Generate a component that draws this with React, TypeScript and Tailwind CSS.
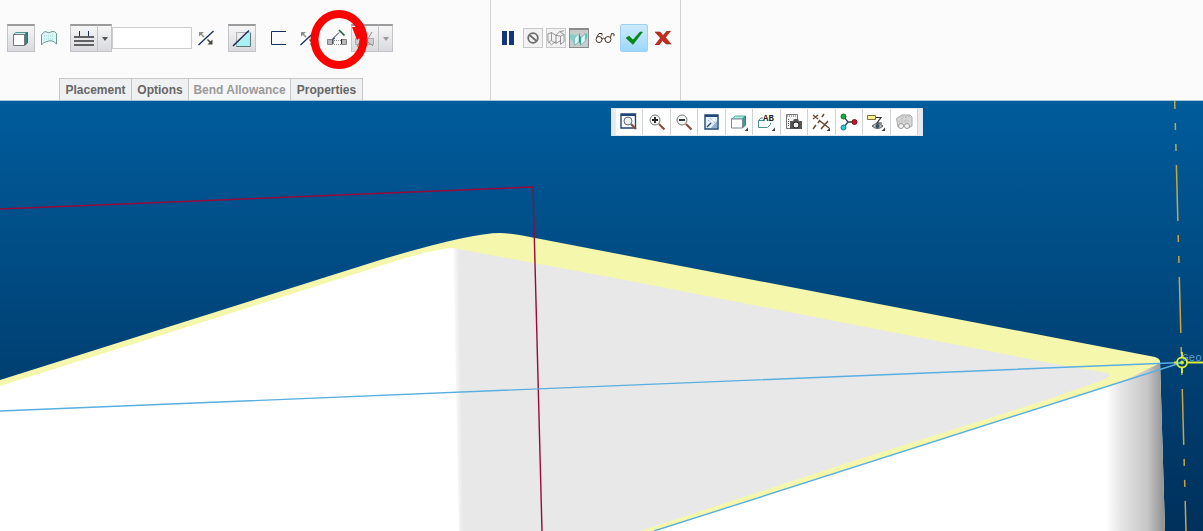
import type { ReactNode } from 'react';
import clsx from 'clsx';

const boxCls = 'border border-[#c4c4c8] border-t-2 border-t-[#9b9b9b] bg-linear-to-b from-[#f6f6f7] to-[#d9dadd]';

function ToolButton({ label, boxed, disabled, className, children }: {
  label: string;
  boxed?: boolean;
  disabled?: boolean;
  className?: string;
  children: ReactNode;
}) {
  return (
    <button
      type="button"
      aria-label={label}
      disabled={disabled}
      className={clsx('relative flex h-7 shrink-0 items-center justify-center', boxed && boxCls, className ?? 'w-7')}
    >
      {children}
    </button>
  );
}

function Caret({ color }: { color: string }) {
  return (
    <svg width="6" height="4" viewBox="0 0 6 4">
      <path d="M0 0h6L3 4z" fill={color} />
    </svg>
  );
}

function SolidIcon() {
  return (
    <svg width="16" height="16" viewBox="0 0 16 16">
      <path d="M.5 3.500 3 1.500h11.500l-2.500 2z" fill="#c4f5f1" stroke="#5c8f90" />
      <path d="M11.500 3.500 14.500 1.500V12l-3 2.500z" fill="#2f8a80" stroke="#356e6c" />
      <path d="M.5 3.500h11v11H.5z" fill="#fff" stroke="#777" />
    </svg>
  );
}

function SurfaceIcon() {
  return (
    <svg width="18" height="16" viewBox="0 0 18 16">
      <path d="M1.500 4.500 5 1.500Q9 4 12 1.500q3-.5 4.500 2V14Q12 9 7 11.500 3 12 1.500 15z" fill="#dff8f6" stroke="#6d9695" />
      <path d="M4 6h10M4 9h10" stroke="#8fd3cd" strokeDasharray="1 1" />
    </svg>
  );
}

function ThicknessIcon() {
  return (
    <svg width="22" height="18" viewBox="0 0 22 18">
      <path d="M6.500 1v5M15.500 1v5" stroke="#14305e" />
      <path d="M1 7h20M1 11h20M1 15h20" stroke="#626262" strokeWidth="2" />
    </svg>
  );
}

function FlipIcon() {
  return (
    <svg width="18" height="16" viewBox="0 0 18 16">
      <path d="M1.500 15 16.500 1" stroke="#14305e" strokeWidth="1.300" />
      <path d="M2 2h5L2 6.500z" fill="#8d8d87" />
      <path d="m4 4 3 3" stroke="#8d8d87" strokeWidth="1.500" />
      <path d="M15.500 9.500v5h-5z" fill="#474740" />
      <path d="m10.500 9.500 3 3" stroke="#474740" strokeWidth="1.500" />
    </svg>
  );
}

function CutIcon() {
  return (
    <svg width="20" height="18" viewBox="0 0 20 18">
      <path d="M4.500 16.500V2.500h14" fill="none" stroke="#777" strokeDasharray="1 1" />
      <path d="M5 16V14L17 2.500h1.500v14H5z" fill="#a7f1f5" />
      <path d="M18.500 2.500v14h-14" fill="none" stroke="#5d7778" />
      <path d="M1 16 17 .5" stroke="#14305e" strokeWidth="1.500" />
    </svg>
  );
}

function OpenProfileIcon() {
  return (
    <svg width="16" height="16" viewBox="0 0 16 16">
      <path d="M15 1.500H.5v13H15" fill="none" stroke="#14305e" />
    </svg>
  );
}

function BendIcon() {
  return (
    <svg width="20" height="18" viewBox="0 0 20 18">
      <path d="M.5 10.500h5v5h-5zM14.500 10.500h5v5h-5z" fill="#b7b7b7" stroke="#858585" />
      <path d="M7 11.500h7M7 15.500h7" stroke="#888" strokeDasharray="1 1" />
      <path d="M6 15V9.500l6-6M14.500 15v-5M6 10l2-1" fill="none" stroke="#14305e" />
      <path d="m12 1 5.500 5.500" stroke="#14652c" strokeWidth="1.600" />
    </svg>
  );
}

function BendOffIcon() {
  return (
    <svg width="22" height="18" viewBox="0 0 22 18">
      <path d="M1.500 8.500h7v6h-7zM13.500 8.500h6v6h-6z" fill="#cfcfcf" stroke="#aaa" />
      <path d="M3 17 11 1M9 17l9-15M1 2l18 14" stroke="#8c8c8c" />
      <path d="m7 16 5-10M10 16l4-8" stroke="#f2aaaa" />
    </svg>
  );
}

function WireBoxIcon({ solid }: { solid?: boolean }) {
  return (
    <svg width="20" height="20" viewBox="0 0 20 20">
      {solid ? (
        <>
          <path d="M0 5h5l5 4v4l-4 4-6-8z" fill="#86cfc9" />
          <path d="m5 9 5-5v9l-5 4zM12 9l5-5v8l-5 5z" fill="#d2fbf6" stroke="#559f9a" strokeWidth=".6" />
          <path d="m10 4 2 4v9l-2-4z" fill="#338e88" />
          <path d="M17 4h2v5l-2 3z" fill="#6abdb7" />
        </>
      ) : (
        <path
          d="M1 5.500 5 4l5 3v9l-5-3V4M1 5.500v8l4 4 5-4M10 7l4-4 5 3v8l-4 3V8l-5-1M14 3l5-1M5 12 1 16M15 8l4-2M10 16l5-3"
          fill="none"
          stroke="#737373"
          strokeWidth=".8"
        />
      )}
    </svg>
  );
}

function GlassesIcon() {
  return (
    <svg width="20" height="12" viewBox="0 0 20 12" fill="none" stroke="#493424">
      <circle cx="4" cy="7.500" r="3" fill="#fff" />
      <circle cx="13" cy="7.500" r="3" fill="#fff" />
      <path d="M7 7q1.500-1.500 3 0M1.500 5.500 4 1.500h3v2M15.500 5.500l1-4 2.500.5v2" />
    </svg>
  );
}

const TABS = [
  { name: 'Placement', width: 'w-[72px]' },
  { name: 'Options', width: 'w-[57px]' },
  { name: 'Bend Allowance', width: 'w-[102px]', disabled: true },
  { name: 'Properties', width: 'w-[73px]' },
];

function FeatureTools() {
  return (
    <div className="flex items-center">
      <div className="ml-[7px] flex">
        <ToolButton label="Solid" boxed><SolidIcon /></ToolButton>
        <ToolButton label="Surface"><SurfaceIcon /></ToolButton>
      </div>
      <div className="ml-[7px] flex items-center">
        <ToolButton label="Thickness" boxed><ThicknessIcon /></ToolButton>
        <ToolButton label="Thickness options" boxed className="w-3.5 border-l-0"><Caret color="#555" /></ToolButton>
        <input aria-label="Depth value" className="h-[22px] w-20 border border-[#cdcdcd] bg-white px-1 text-xs" />
        <ToolButton label="Flip direction"><FlipIcon /></ToolButton>
      </div>
      <div className="ml-2">
        <ToolButton label="Remove material" boxed><CutIcon /></ToolButton>
      </div>
      <div className="ml-2 flex">
        <ToolButton label="Thicken sketch" className="w-[29px]"><OpenProfileIcon /></ToolButton>
        <ToolButton label="Flip side" className="w-[29px]"><FlipIcon /></ToolButton>
        <ToolButton label="Add bends on edges" className="z-10 w-[29px]">
          <BendIcon />
          <svg className="pointer-events-none absolute -top-4 -left-3 max-w-none" width="58" height="62" viewBox="0 0 58 62">
            <ellipse cx="29" cy="31.500" rx="24.500" ry="25.500" fill="none" stroke="#fe0000" strokeWidth="8" />
            <path d="M42 19h10v9l-5 4z" fill="#fe0000" />
          </svg>
        </ToolButton>
        <ToolButton label="Bend side" boxed disabled><BendOffIcon /></ToolButton>
        <ToolButton label="Bend side options" boxed disabled className="w-3.5 border-l-0"><Caret color="#999" /></ToolButton>
      </div>
    </div>
  );
}

function DashboardControls() {
  const small = 'flex size-5 items-center justify-center border border-[#c9c9c9] bg-[#f2f2f2]';
  return (
    <div className="flex items-center gap-[5px] pl-[7px]">
      <button type="button" aria-label="Pause" className="flex h-7 w-5 items-center justify-center">
        <svg width="12" height="14" viewBox="0 0 12 14"><path d="M0 0h5v14H0zM7 0h5v14H7z" fill="#17357c" /></svg>
      </button>
      <div className="flex gap-[3px]">
        <button type="button" aria-label="No preview" className={small}>
          <svg width="12" height="12" viewBox="0 0 12 12" fill="none" stroke="#6c6c6c" strokeWidth="1.800">
            <circle cx="6" cy="6" r="4.800" />
            <path d="m2.500 3 7 6" />
          </svg>
        </button>
        <button type="button" aria-label="Unattached preview" className={small}><WireBoxIcon /></button>
        <button type="button" aria-label="Attached preview" className="flex size-5 items-center justify-center border border-t-2 border-[#8b8b8b] bg-[#c9cacc]">
          <WireBoxIcon solid />
        </button>
      </div>
      <button type="button" aria-label="Verify" className="flex h-7 w-[21px] items-center justify-center"><GlassesIcon /></button>
      <button type="button" aria-label="Accept" className="flex size-7 items-center justify-center rounded-xs border border-[#9fd2f1] bg-linear-to-b from-[#cbeafa] to-[#9bd8fb]">
        <svg width="18" height="14" viewBox="0 0 18 14"><path d="m1 7 3-2 4 4 7-8h2.500L8 13.500z" fill="#078a15" stroke="#086c11" strokeWidth=".5" /></svg>
      </button>
      <button type="button" aria-label="Cancel" className="flex h-7 w-5 items-center justify-center">
        <svg width="16" height="14" viewBox="0 0 16 14">
          <path d="M0 1h5l3 3.500L12 0h3.500l-5 6.500L16 13h-5L7.500 9.500 4 14H0l5.500-7z" fill="#c92a19" stroke="#8b2218" strokeWidth=".6" />
        </svg>
      </button>
    </div>
  );
}

function Magnifier({ sign }: { sign: string }) {
  return (
    <>
      <path d="m11 11 5.500 5.500" stroke="#87503f" strokeWidth="2.200" />
      <circle cx="7" cy="7" r="5" fill="#f4f7f7" stroke="#777" />
      <path d={sign} stroke="#222" strokeWidth="1.800" />
    </>
  );
}

const corner = <path d="M18 14.500V18h-3.500z" fill="#444" />;

const VIEW_TOOLS = [
  {
    label: 'Refit',
    icon: (
      <>
        <path d="M1 1h14.500v14H1z" fill="#fff" stroke="#1f4676" strokeWidth="1.400" />
        <path d="M1 2h14" stroke="#1f4676" strokeWidth="2" />
        <path d="m11 11 5 5" stroke="#87503f" strokeWidth="2.200" />
        <circle cx="8" cy="8" r="4" fill="#e8f3f7" stroke="#667" />
      </>
    ),
  },
  { label: 'Zoom in', icon: <Magnifier sign="M4 7h6M7 4v6" /> },
  { label: 'Zoom out', icon: <Magnifier sign="M4 7h6" /> },
  {
    label: 'Repaint',
    icon: (
      <>
        <path d="M2 2h13v14H2z" fill="#e3f0fa" stroke="#1f4676" strokeWidth="1.400" />
        <path d="M2 3h13" stroke="#1f4676" strokeWidth="2" />
        <path d="M8 15 14 8v7z" fill="#91add2" />
        <path d="m6 12 6-6" stroke="#fff" strokeWidth="2" />
        <path d="m4 14 4-4" stroke="#304869" strokeWidth="1.500" />
        <path d="m5 7 5 4M7 5l5 5" stroke="#8aa2bf" strokeDasharray="1 1" />
      </>
    ),
  },
  {
    label: 'Display style',
    icon: (
      <>
        <path d="m1.500 6 4-3h10l-3 3z" fill="#a9f1e0" stroke="#58ac9d" />
        <path d="m12.500 6 3-3v9l-3 3z" fill="#36a18e" stroke="#348477" />
        <path d="M1.500 6h11v9h-11z" fill="#fff" stroke="#789" />
        {corner}
      </>
    ),
  },
  {
    label: 'Saved orientations',
    icon: (
      <>
        <path d="M6 5H4L1.500 7.500v7h9l3-3V10M1.500 7.500H6" fill="none" stroke="#4b8f91" />
        <text x="6" y="8" fontSize="9" fontWeight="700" fill="#222" fontFamily="Liberation Mono, monospace">AB</text>
        {corner}
      </>
    ),
  },
  {
    label: 'View manager',
    icon: (
      <>
        <path d="M1.500 1.500h11v14h-11z" fill="#f5f5f5" stroke="#777" />
        <path d="M2 3h10M3.500 6v8" stroke="#555" strokeDasharray="1 1" />
        <path d="M5 8h3l1-2h4l1 2h3v8H5z" fill="#555" />
        <circle cx="11" cy="12" r="3" fill="#eee" stroke="#222" />
      </>
    ),
  },
  {
    label: 'Datum display filters',
    icon: (
      <>
        <path
          d="m1 2 5 4M6 2 1 6M12 1l-2 3M8 7l-2 3M4 12l-3 4M8 8l9 7M16 8l-7 8"
          fill="none"
          stroke="#6b4730"
          strokeWidth="1.500"
        />
        {corner}
      </>
    ),
  },
  {
    label: 'Spin center',
    icon: (
      <>
        <path d="m4 4 4 5-4 5M8 9h6" fill="none" stroke="#24494d" strokeWidth="1.300" />
        <circle cx="3.500" cy="3.500" r="2.500" fill="#1bae3d" stroke="#116a28" />
        <circle cx="14.500" cy="9" r="2.500" fill="#c91822" stroke="#7b121a" />
        <circle cx="3.500" cy="14.500" r="2.500" fill="#36c6cf" stroke="#167c8b" />
      </>
    ),
  },
  {
    label: 'Annotation display',
    icon: (
      <>
        <path d="M.5 2.500h8v4h-8z" fill="#fff393" stroke="#80702c" />
        <path d="M9 4.500h5L10 10h5" fill="none" stroke="#333" strokeWidth="1.200" />
        <path d="M5 13q5.500-5 11 0-5.500 5-11 0z" fill="#bbc3ca" stroke="#555" />
        <circle cx="10.500" cy="13" r="2" fill="#344c62" />
        {corner}
      </>
    ),
  },
  {
    label: 'Show regions',
    disabled: true,
    icon: (
      <>
        <path d="M1.500 5.500 4 4l3-2h8l2 2v9l-3 2-2-3-9 2z" fill="#d7d7d7" stroke="#aaa" />
        <path d="M4 4h11M3 8h12M7 2v8M11 3v7" stroke="#bbb" strokeDasharray="2 1" />
        <circle cx="6" cy="13" r="2.500" fill="#f3f3f3" stroke="#999" />
        <circle cx="12" cy="13" r="2.500" fill="#f3f3f3" stroke="#999" />
      </>
    ),
  },
];

function ViewToolbar() {
  return (
    <div className="absolute top-[7px] left-[611px] flex h-7 w-[312px] border border-[#dfe7ec] bg-[#e8ebee] px-1">
      {VIEW_TOOLS.map((t) => (
        <button
          key={t.label}
          type="button"
          aria-label={t.label}
          disabled={t.disabled}
          className="flex flex-1 items-center justify-center border-r border-[#cfd3d6] bg-white"
        >
          <svg width="18" height="18" viewBox="0 0 18 18">{t.icon}</svg>
        </button>
      ))}
    </div>
  );
}

function ModelView() {
  return (
    <svg className="block h-auto w-full" viewBox="0 101 1203 430" role="img" aria-label="Sheet metal model">
      <defs>
        <linearGradient id="sky" x1="0" y1="0" x2="0" y2="1">
          <stop offset="0" stopColor="#005c9c" />
          <stop offset="1" stopColor="#00305b" />
        </linearGradient>
        <linearGradient id="fold" gradientUnits="userSpaceOnUse" x1="1106" y1="0" x2="1165" y2="0">
          <stop offset="0" stopColor="#fff" />
          <stop offset=".25" stopColor="#e6e6e6" />
          <stop offset=".7" stopColor="#c6c6c6" />
          <stop offset="1" stopColor="#8e8e8e" />
        </linearGradient>
        <linearGradient id="face" gradientUnits="userSpaceOnUse" x1="452" y1="248" x2="459" y2="247.900">
          <stop offset="0" stopColor="#fff" />
          <stop offset="1" stopColor="#e8e8e8" />
        </linearGradient>
      </defs>
      <path d="M0 101h1203v430H0z" fill="url(#sky)" />

      <path d="M0 384 380 263Q435 246 453 246L1090 370 1160 361 1165 531H0z" fill="#fff" />
      <path d="M1090 385 1160 361 1165 531H1090z" fill="url(#fold)" />
      <path d="M453 246 1100 370 1115 375 1108 383 648 531H459z" fill="url(#face)" />

      {/* sheet edge */}
      <path
        d="M0 380 380 260Q470 233 500 233 510 233 530 237L1155 357Q1161 359 1160 363L1130 378 1100 388.500 654 531H640L850 462 1040 402 1098 382Q1113 377 1108 373L1060 365 630 281 453 248Q435 248 380 266L0 386z"
        fill="#f4f7ac"
      />

      <path d="M0 209 533 187 542 531" fill="none" stroke="#960b3a" strokeWidth="1.400" />
      <path d="M0 411 1182 362.500M654 531 1182 362.500" fill="none" stroke="#5aafe0" strokeWidth="1.400" />

      <path d="M1174.700 101 1186 531" stroke="#c9a544" strokeWidth="1.500" strokeDasharray="56 14 7 14 7 14" strokeDashoffset="48" />
      <text x="1182" y="361" fontSize="11" fill="#5f9fd0" fontFamily="Liberation Mono, monospace">Geo</text>
      <g fill="none" stroke="#d9ee38" strokeWidth="1.800">
        <circle cx="1182" cy="362.500" r="5" />
        <path d="M1182 352v5M1182 368v5M1187 362.500h16M1174 362.500h3" />
        <circle cx="1182" cy="362.500" r="1.500" fill="#d9ee38" strokeWidth="1" />
      </g>
    </svg>
  );
}

export default function App() {
  return (
    <div className="min-h-screen overflow-hidden bg-white font-['Liberation_Sans',Arial,sans-serif]">
      <header className="flex border-b border-[#a5c8de] bg-[#fbfbfb]">
        <div className="flex w-[491px] shrink-0 flex-col border-r border-[#d3d3d3] pt-6">
          <FeatureTools />
          <nav className="mt-[26px] ml-[59px] flex">
            {TABS.map((t) => (
              <button
                key={t.name}
                type="button"
                disabled={t.disabled}
                className={clsx(
                  'h-[22px] border-t border-l border-[#c6c6c8] text-xs font-bold whitespace-nowrap last:border-r',
                  t.disabled ? 'bg-[#f7f7f8] text-[#9a9a9a]' : 'bg-[#eff0f2] text-[#666]',
                  t.width,
                )}
              >
                {t.name}
              </button>
            ))}
          </nav>
        </div>
        <div className="w-[190px] shrink-0 border-r border-[#d3d3d3] pt-6">
          <DashboardControls />
        </div>
      </header>
      <main className="relative">
        <ModelView />
        <ViewToolbar />
      </main>
    </div>
  );
}
